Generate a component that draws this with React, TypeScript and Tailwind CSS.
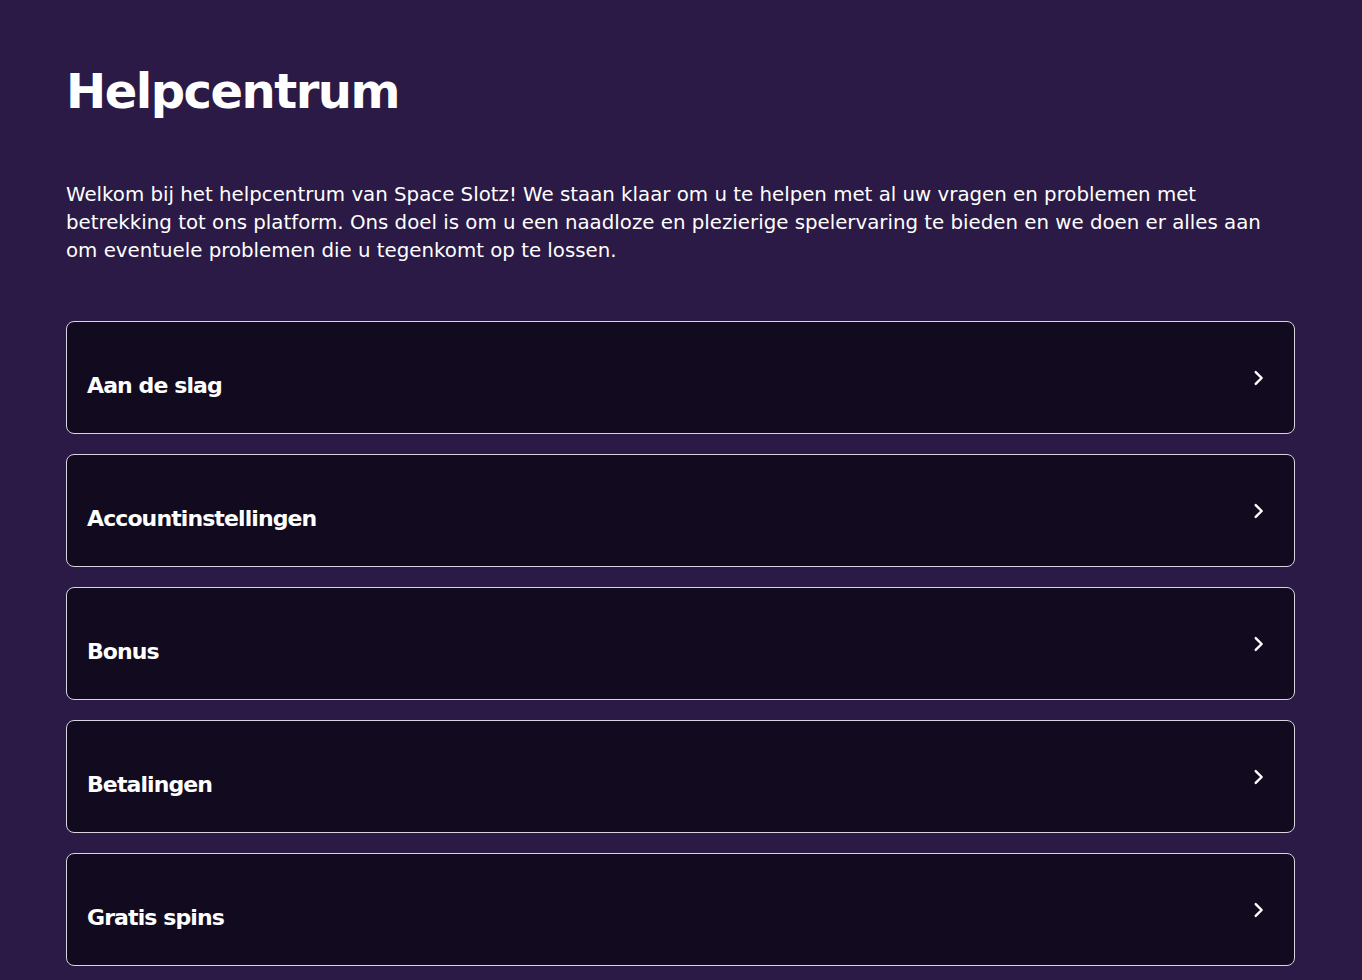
import React from "react";

const items = ["Aan de slag", "Accountinstellingen", "Bonus", "Betalingen", "Gratis spins"];

function Chevron() {
  return (
    <svg width="22" height="22" viewBox="0 0 24 24" fill="none" stroke="white" strokeWidth="2.6" strokeLinecap="round" strokeLinejoin="round">
      <path d="M9.5 5.5l6.5 6.5-6.5 6.5" />
    </svg>
  );
}

export default function App() {
  return (
    <div className="min-h-screen w-full bg-[#2a1a45] text-white" style={{ fontFamily: '"DejaVu Sans", sans-serif' }}>
      <div className="px-[66px] pt-[61px] pb-10">
        <h1 className="text-[48px] leading-[60px] font-bold tracking-[-1.5px] text-white">Helpcentrum</h1>
        <p className="mt-[60px] text-[19.8px] leading-[28px] text-white w-[1212px]">
          Welkom bij het helpcentrum van Space Slotz! We staan klaar om u te helpen met al uw vragen en problemen met betrekking tot ons platform. Ons doel is om u een naadloze en plezierige spelervaring te bieden en we doen er alles aan om eventuele problemen die u tegenkomt op te lossen.
        </p>
        <div className="mt-[56px] flex flex-col gap-[20px] w-[1229px]">
          {items.map((t) => (
            <div key={t} className="h-[113px] rounded-[8px] border border-[#d8d4e0] bg-[#120b1f] flex items-center justify-between pl-[20px] pr-[25px]">
              <span className="pt-[16px] text-[22px] font-bold tracking-[-0.9px]">{t}</span>
              <span><Chevron /></span>
            </div>
          ))}
        </div>
      </div>
    </div>
  );
}
